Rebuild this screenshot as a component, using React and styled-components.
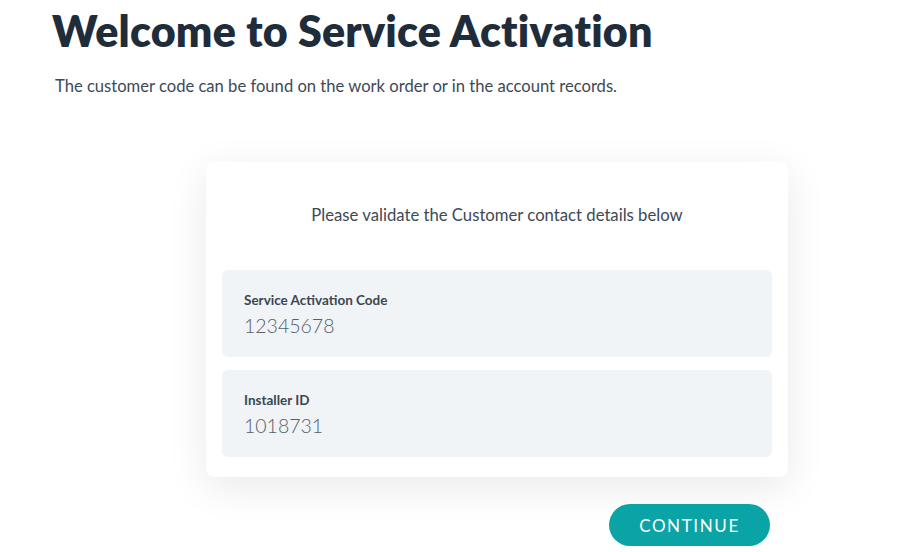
import React from "react";
import styled, { createGlobalStyle } from "styled-components";

const GlobalStyle = createGlobalStyle`
  body {
    margin: 0;
    background: #ffffff;
    font-family: Lato, "Open Sans", sans-serif;
  }
`;

const Page = styled("main")`
  width: 900px;
  height: 552px;
  box-sizing: border-box;
  padding: 5px 0 0 52px;
  overflow: hidden;
`;

const Heading = styled("h1")`
  margin: 0;
  font-size: 43px;
  line-height: 52px;
  font-weight: 800;
  color: #1f2d3a;
  letter-spacing: 0.2px;
`;

const Intro = styled("p")`
  margin: 19px 0 0 3px;
  font-size: 16.6px;
  color: #3d4a55;
`;

const Card = styled("section")`
  margin: 66px 0 0 154px;
  width: 582px;
  box-sizing: border-box;
  padding: 43px 16px 20px;
  background: #ffffff;
  border-radius: 8px;
  box-shadow: 0 10px 40px rgba(0, 0, 0, 0.09);
`;

const CardTitle = styled("p")`
  margin: 0 0 45px;
  text-align: center;
  font-size: 16.7px;
  color: #3d4a55;
`;

const Field = styled("div")`
  background: #f0f4f7;
  border-radius: 6px;
  padding: 22px 22px 18px;
  height: 87px;
  box-sizing: border-box;

  & + & {
    margin-top: 13px;
  }
`;

const Label = styled("div")`
  font-size: 13.5px;
  font-weight: 700;
  color: #3a4651;
`;

const Value = styled("div")`
  margin-top: 6px;
  font-size: 19.5px;
  font-weight: 300;
  color: #56606a;
`;

const Actions = styled("div")`
  width: 718px;
  display: flex;
  justify-content: flex-end;
  margin-top: 27px;
`;

const Button = styled("button")`
  width: 161px;
  height: 42px;
  border: none;
  border-radius: 21px;
  background: #0aa3a6;
  color: #ffffff;
  font-family: Lato, sans-serif;
  font-size: 17px;
  letter-spacing: 1.6px;
  cursor: pointer;
`;

const fields = [
  { label: "Service Activation Code", value: "12345678" },
  { label: "Installer ID", value: "1018731" },
];

export default function App() {
  return (
    <>
      <GlobalStyle />
      <Page>
        <Heading>Welcome to Service Activation</Heading>
        <Intro>
          The customer code can be found on the work order or in the account
          records.
        </Intro>
        <Card>
          <CardTitle>Please validate the Customer contact details below</CardTitle>
          {fields.map(({ label, value }) => (
            <Field key={label}>
              <Label>{label}</Label>
              <Value>{value}</Value>
            </Field>
          ))}
        </Card>
        <Actions>
          <Button>CONTINUE</Button>
        </Actions>
      </Page>
    </>
  );
}
